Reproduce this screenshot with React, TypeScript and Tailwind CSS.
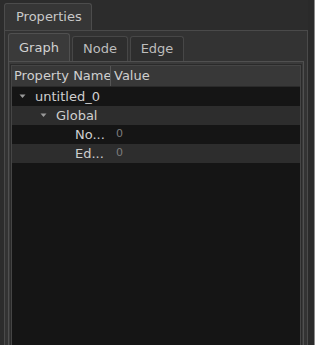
const rows = [
  { label: 'untitled_0', indent: 'pl-[7px]', arrow: true, value: '', dark: true },
  { label: 'Global', indent: 'pl-[28px]', arrow: true, value: '', dark: false },
  { label: 'No...', indent: 'pl-[63px]', arrow: false, value: '0', dark: true },
  { label: 'Ed...', indent: 'pl-[63px]', arrow: false, value: '0', dark: false },
];

function Arrow() {
  return (
    <svg width="7" height="5" viewBox="0 0 7 5" className="mr-[9px] shrink-0">
      <path d="M0.5 0.5 L6.5 0.5 L3.5 4 Z" fill="#9a9a9a" />
    </svg>
  );
}

export default function App() {
  return (
    <div className="w-[315px] h-[345px] overflow-hidden bg-[#2c2c2c] flex text-[13px] text-[#cfcfcf] font-['DejaVu_Sans',sans-serif]">
      <div className="w-[308px] flex flex-col pl-[4px] pt-[3px]">
        {/* dock title tab */}
        <div className="w-[88px] h-[27px] shrink-0 bg-[#363636] border border-b-0 border-[#4c4c4c] rounded-t-[3px] flex items-center pl-[11px] text-[#c8c8c8]">
          Properties
        </div>
        <div className="flex-1 bg-[#333333] border border-b-0 border-[#4a4a4a] flex flex-col pl-[3px] pr-[3px] pt-[2px]">
          {/* tabs */}
          <div className="flex items-end h-[28px] shrink-0 gap-[2px]">
            <div className="w-[62px] h-[28px] bg-[#3a3a3a] border border-b-0 border-[#505050] rounded-t-[3px] flex items-center justify-center text-[#d2d2d2]">
              Graph
            </div>
            <div className="w-[56px] h-[25px] bg-[#2e2e2e] border border-b-0 border-[#474747] rounded-t-[3px] flex items-center justify-center text-[#bdbdbd]">
              Node
            </div>
            <div className="w-[54px] h-[25px] bg-[#2e2e2e] border border-b-0 border-[#474747] rounded-t-[3px] flex items-center justify-center text-[#bdbdbd]">
              Edge
            </div>
          </div>
          {/* tab pane */}
          <div className="flex-1 bg-[#3a3a3a] border border-b-0 border-[#505050] pl-[2px] pr-[2px] pt-[3px] flex flex-col">
            <div className="flex-1 bg-[#151515] border border-b-0 border-[#454545] outline outline-1 outline-[#2a2a2a] flex flex-col">
              <div className="h-[21px] shrink-0 bg-[#383838] border-b border-[#2a2a2a] flex">
                <div className="w-[99px] overflow-hidden whitespace-nowrap pl-[2px] leading-[20px] border-r border-[#555555]">
                  Property Name
                </div>
                <div className="pl-[3px] leading-[20px]">Value</div>
              </div>
              {rows.map((r) => (
                <div
                  key={r.label}
                  className={`h-[19px] shrink-0 flex items-center ${r.dark ? 'bg-[#151515]' : 'bg-[#2d2d2d]'}`}
                >
                  <div className={`w-[100px] flex items-center ${r.indent}`}>
                    {r.arrow && <Arrow />}
                    <span className="whitespace-nowrap">{r.label}</span>
                  </div>
                  <div className="pl-[4px] text-[11px] text-[#7c7c7c]">{r.value}</div>
                </div>
              ))}
            </div>
          </div>
        </div>
      </div>
      <div className="flex-1 flex">
        <div className="flex-1 bg-[#2a2a2a]" />
        <div className="w-[1px] bg-[#8a8a8a]" />
      </div>
    </div>
  );
}
